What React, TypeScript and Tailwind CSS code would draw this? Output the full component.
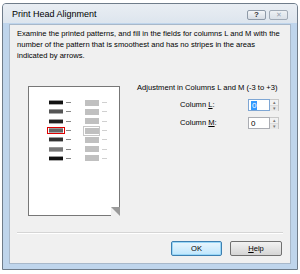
import React from 'react'

const font = { fontFamily: '"Liberation Sans", Arial, sans-serif' }

// one row of the printed test pattern
const PatternRow = ({ idx }: { idx: number }) => {
    const selected = idx === 3
    const bars = ['#111', '#555', '#222', '#666', '#333', '#777', '#111']
    return (
        <div className="flex items-center h-[9.3px]">
            <div className={selected ? "w-[18px] h-[7px] border border-[#e00000] flex items-center justify-center" : "w-[18px] h-[7px] flex items-center justify-center"}>
                <div className="w-[14px] h-[3px]" style={{ background: bars[idx], boxShadow: '0 -1px 0 #999, 0 1px 0 #aaa' }} />
            </div>
            <div className="w-[5px] h-px bg-[#888] ml-[1px]" />
            <div className={selected ? "ml-[12px] w-[17px] h-[10px] border border-[#c8c8c8] flex items-center justify-center" : "ml-[12px] w-[17px] h-[10px] flex items-center justify-center"}>
                <div className="w-[14px] h-[6px] bg-[#c0c0c0]" />
            </div>
            <div className="w-[5px] h-px bg-[#d0d0d0] ml-[2px]" />
        </div>
    )
}

const Spinner = ({ value, focused }: { value: string, focused?: boolean }) => (
    <div className="flex h-[12px]">
        <div className={focused ? "w-[22px] h-full border border-[#7ea6d4] bg-white flex items-center pl-[2px]" : "w-[22px] h-full border border-[#abadb3] bg-white flex items-center pl-[2px]"}>
            <span className={focused ? "bg-[#3399ff] text-white text-[8px] leading-[9px] px-px" : "text-[8px] leading-[9px]"}>{value}</span>
        </div>
        <div className="w-[9px] h-full border border-l-0 border-[#c8c8c8] flex flex-col">
            <div className="flex-1 bg-[#f2f2f2] border-b border-[#dcdcdc] flex items-center justify-center text-[5px] leading-none text-[#777]">▴</div>
            <div className="flex-1 bg-[#e8e8e8] flex items-center justify-center text-[5px] leading-none text-[#777]">▾</div>
        </div>
    </div>
)

export default function App() {
    return (
        <div className="w-[300px] h-[274px] bg-white overflow-hidden" style={font}>
            <div className="ml-[2px] mt-[3px] w-[296px] h-[267px] border border-[#6f7c8a] rounded-t-[4px] bg-[#bfd5ec] flex flex-col">
                {/* title bar */}
                <div className="h-[19px] bg-gradient-to-b from-[#e9eef3] to-[#dde5ee] rounded-t-[3px] flex items-center px-[9px]">
                    <span className="text-[9px] text-black mt-[2px]">Print Head Alignment</span>
                    <div className="ml-auto flex gap-[3px] mt-[2px]">
                        <div className="w-[19px] h-[10px] border border-[#8e9aa8] rounded-[2px] bg-gradient-to-b from-[#f4f6f8] to-[#d6dde5] flex items-center justify-center text-[8px] leading-none font-bold text-[#333]">?</div>
                        <div className="w-[19px] h-[10px] border border-[#a0aab6] rounded-[2px] bg-gradient-to-b from-[#eef1f4] to-[#d9e0e8] flex items-center justify-center text-[7px] leading-none text-[#9aa4b0]">✕</div>
                    </div>
                </div>
                <div className="flex-1 mx-[6px] mb-[5px] mt-px bg-[#f0f0f0] border border-[#a8b8ca] flex flex-col">
                    <p className="text-[7.6px] leading-[11px] text-black px-[7px] pt-[3px]">
                        Examine the printed patterns, and fill in the fields for columns L and M with the number of the pattern that is smoothest and has no stripes in the areas indicated by arrows.
                    </p>
                    <div className="flex mt-[25px]">
                        {/* paper */}
                        <div className="ml-[18px] w-[92px] h-[130px] border border-[#777] bg-white relative">
                            <div className="pt-[11px] pl-[18px] flex flex-col">
                                {[0, 1, 2, 3, 4, 5, 6].map(i => <PatternRow key={i} idx={i} />)}
                            </div>
                            <div className="absolute right-[-1px] bottom-[-1px] w-[9px] h-[9px] bg-[#f0f0f0]">
                                <div className="w-0 h-0 border-t-[9px] border-t-[#9a9a9a] border-l-[9px] border-l-transparent" />
                            </div>
                        </div>
                        {/* adjustments */}
                        <div className="ml-[17px] flex flex-col text-[7.6px] text-black">
                            <span className="leading-[10px] -mt-[3px]">Adjustment in Columns L and M (-3 to +3)</span>
                            <div className="flex items-center mt-[6px] ml-[43px]">
                                <span className="w-[68px]">Column <u>L</u>:</span>
                                <Spinner value="0" focused />
                            </div>
                            <div className="flex items-center mt-[6px] ml-[43px]">
                                <span className="w-[68px]">Column <u>M</u>:</span>
                                <Spinner value="0" />
                            </div>
                        </div>
                    </div>
                    <div className="mx-[7px] mt-[16px] h-px bg-[#d5d5d5] border-b border-white box-content" />
                    <div className="flex justify-end gap-[8px] mt-[7px] mr-[8px]">
                        <div className="w-[51px] h-[15px] border border-[#3c7fb1] rounded-[2px] bg-gradient-to-b from-[#eaf6fd] to-[#bee6fd] flex items-center justify-center text-[7.6px] shadow-[inset_0_0_0_1px_#9ad7f7]">OK</div>
                        <div className="w-[52px] h-[15px] border border-[#707070] rounded-[2px] bg-gradient-to-b from-[#f2f2f2] to-[#d5d5d5] flex items-center justify-center text-[7.6px]"><u>H</u>elp</div>
                    </div>
                </div>
            </div>
        </div>
    )
}
